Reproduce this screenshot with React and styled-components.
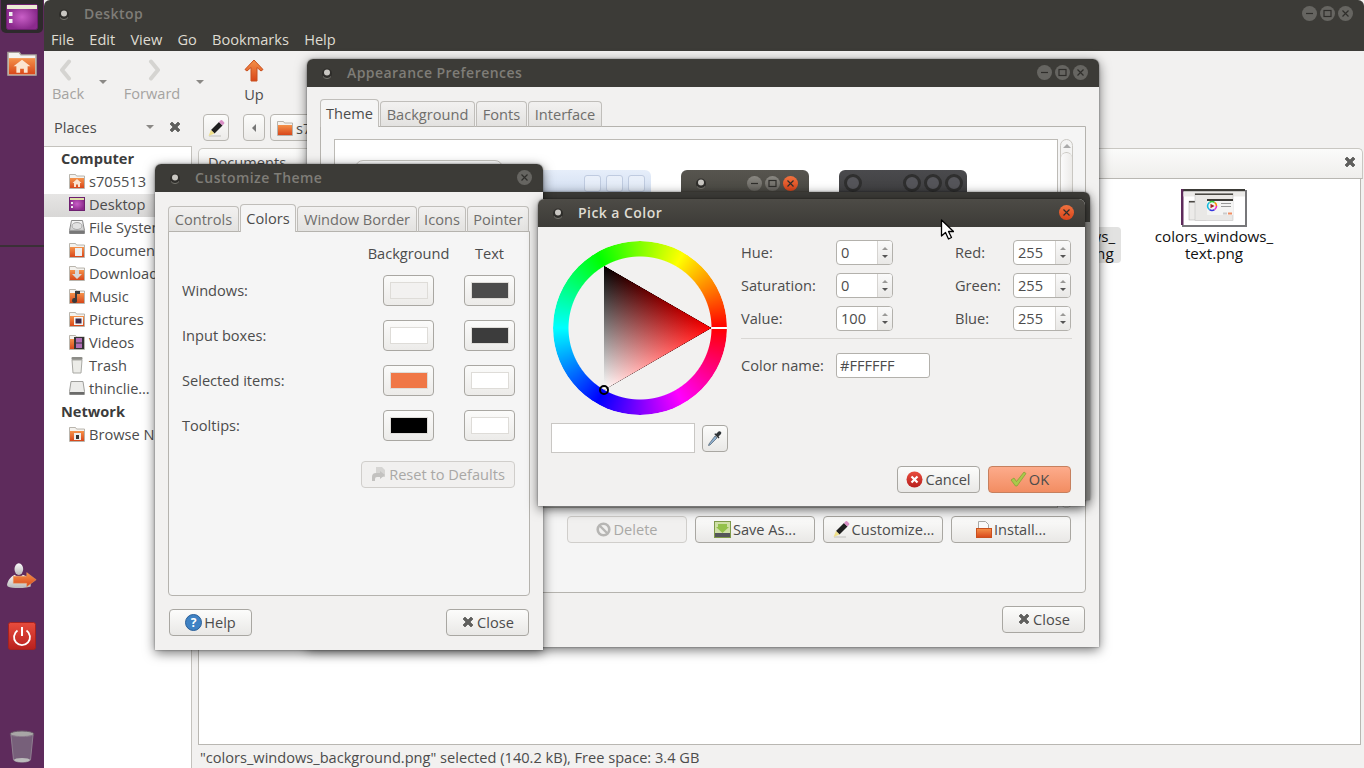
import React from 'react'
import styled, { createGlobalStyle } from 'styled-components'

const ink = '#4c4c4c'
const FONT = `"Open Sans", "Noto Sans", sans-serif`

const GlobalStyle = createGlobalStyle`
  html, body { margin: 0; padding: 0; overflow: hidden; background: #fff; }
  #root { width: 1364px; height: 768px; }
  svg { display: block; flex: none; }
`

const Desktop = styled.div`
  position: relative;
  width: 1364px;
  height: 768px;
  display: flex;
  overflow: hidden;
  font-family: ${FONT};
  font-size: 14.6px;
  color: ${ink};
`

/* launcher */
const Launcher = styled.nav`
  width: 44px;
  height: 768px;
  flex: none;
  background: #5e2b5c;
  display: flex;
  flex-direction: column;
  align-items: center;
`
const ActiveTile = styled.div`
  width: 42px;
  height: 33px;
  margin-top: 0;
  border-radius: 0 0 5px 5px;
  background: #2e2a2c;
  display: flex;
  align-items: center;
  justify-content: center;
`
const LaunchSlot = styled.div`
  margin-top: ${p => p.$top}px;
  height: ${p => p.$h}px;
  display: flex;
  align-items: center;
  justify-content: center;
`
const LaunchRule = styled.div`
  width: 44px;
  height: 2px;
  margin-top: 170px;
  background: #3a3036;
`

/* file manager */
const FileManager = styled.main`
  flex: 1;
  min-width: 0;
  display: flex;
  flex-direction: column;
  background: #f2f1f0;
`
const TitleBar = styled.header`
  height: 28px;
  flex: none;
  box-sizing: border-box;
  display: flex;
  align-items: center;
  padding: 0 ${p => p.$right || 11}px 1px 14px;
  background: ${p => p.$active ? 'linear-gradient(#4d4b46, #3c3b37)' : '#3c3b37'};
  border-radius: 6px 6px 0 0;
`
const TitleText = styled.span`
  margin-left: 14px;
  font-size: 14px;
  font-weight: 600;
  letter-spacing: 0.45px;
  color: ${p => p.$active ? '#dfdbd2' : '#7f7d77'};
  flex: 1;
  white-space: nowrap;
`
const TitleButtons = styled.div`
  display: flex;
  gap: 3px;
`
const RoundButton = styled.span`
  width: 15px;
  height: 15px;
  border-radius: 50%;
  display: flex;
  align-items: center;
  justify-content: center;
  background: ${p => p.$tone === 'hot' ? 'linear-gradient(#f0723f, #d8441a)' : p.$tone === 'lit' ? 'linear-gradient(#8a8882, #64625d)' : '#666561'};
`
const MenuBar = styled.div`
  height: 23px;
  flex: none;
  display: flex;
  align-items: center;
  gap: 15.2px;
  padding-left: 7px;
  background: #3c3b37;
  color: #dfdbd2;
  padding-bottom: 1px;
  box-sizing: border-box;
`
const ToolBar = styled.div`
  height: 63px;
  flex: none;
  display: flex;
`
const ToolItem = styled.div`
  width: ${p => p.$w}px;
  display: flex;
  flex-direction: column;
  align-items: center;
  padding-top: 8px;
  gap: 2px;
  color: ${p => p.$off ? '#a5a3a0' : ink};
`
const ToolArrow = styled.div`
  width: ${p => p.$w}px;
  padding-top: 29px;
  display: flex;
  justify-content: center;
`
const Caret = styled.span`
  width: 0;
  height: 0;
  border-left: ${p => p.$size || 4}px solid transparent;
  border-right: ${p => p.$size || 4}px solid transparent;
  ${p => p.$up ? 'border-bottom' : 'border-top'}: ${p => p.$size || 4}px solid ${p => p.$color || '#8b8986'};
  ${p => p.$left ? 'transform: rotate(90deg);' : ''}
`
const Panes = styled.div`
  flex: 1;
  min-height: 0;
  display: flex;
`
const SideColumn = styled.aside`
  width: 148px;
  flex: none;
  display: flex;
  flex-direction: column;
`
const PlacesHead = styled.div`
  height: 32px;
  flex: none;
  display: flex;
  align-items: center;
  gap: 14px;
  padding: 0 10px 7px;
  box-sizing: border-box;
`
const PlacesLabel = styled.span`
  flex: 1;
`
const SideTree = styled.div`
  flex: 1;
  background: #fff;
  border-top: 1px solid #c4c2bd;
  border-right: 1px solid #c4c2bd;
  padding-top: 1px;
  overflow: hidden;
`
const SideHeading = styled.div`
  height: 23px;
  line-height: 20px;
  padding-left: 17px;
  font-weight: 700;
  color: #3c3c3c;
`
const SideRow = styled.div`
  height: 23px;
  box-sizing: border-box;
  display: flex;
  align-items: center;
  gap: 4px;
  padding: 0 0 4px 25px;
  white-space: nowrap;
  background: ${p => p.$selected ? 'linear-gradient(#e6e5e4, #d8d7d6)' : 'transparent'};
`
const MainColumn = styled.div`
  flex: 1;
  min-width: 0;
  display: flex;
  flex-direction: column;
`
const PathBar = styled.div`
  height: 34px;
  flex: none;
  display: flex;
  align-items: flex-start;
  padding-left: 11px;
`
const PathButton = styled.div`
  width: ${p => p.$w}px;
  height: 27px;
  margin-right: ${p => p.$gap || 0}px;
  box-sizing: border-box;
  display: flex;
  align-items: center;
  justify-content: ${p => p.$left ? 'flex-start' : 'center'};
  gap: 3px;
  padding-left: ${p => p.$left ? 6 : 0}px;
  border: 1px solid #b8b6b1;
  border-radius: 4px;
  background: linear-gradient(#fcfcfb, #ecebe9);
`
const ViewArea = styled.div`
  flex: 1;
  min-height: 0;
  display: flex;
  flex-direction: column;
  margin-left: 6px;
  margin-right: 1px;
`
const TabStrip = styled.div`
  flex: none;
  display: flex;
  align-items: center;
  justify-content: space-between;
  padding: 0 5px 3px 9px;
  height: 26px;
  border: 1px solid #c9c7c2;
  border-bottom: 1px solid #b9b7b2;
  border-radius: 5px 5px 0 0;
  background: linear-gradient(#fbfbfa, #efeeec);
`
const FileGrid = styled.div`
  flex: 1;
  min-height: 0;
  display: flex;
  justify-content: flex-end;
  align-items: flex-start;
  padding: 10px 81px 0 0;
  margin-right: 2px;
  background: #fff;
  border: 1px solid #b9b7b2;
  border-top: 0;
  color: #111;
  font-size: 15.2px;
`
const FileCell = styled.figure`
  width: 130px;
  margin: 0 0 0 ${p => p.$gap || 0}px;
  display: flex;
  flex-direction: column;
  align-items: center;
`
const FileThumb = styled.div`
  height: 38px;
  display: flex;
  align-items: flex-end;
`
const FileName = styled.figcaption`
  width: 130px;
  margin-top: 0;
  padding: 1px 0;
  text-align: center;
  line-height: 17px;
  border-radius: 4px;
  background: ${p => p.$selected ? '#e2e2e1' : 'transparent'};
`
const StatusBar = styled.footer`
  height: 23px;
  flex: none;
  line-height: 25px;
  padding-left: 8px;
  white-space: nowrap;
`

/* floating windows */
const Win = styled.section`
  position: absolute;
  left: ${p => p.$x}px;
  top: ${p => p.$y}px;
  width: ${p => p.$w}px;
  height: ${p => p.$h}px;
  display: flex;
  flex-direction: column;
  background: #f2f1f0;
  border-radius: 6px 6px 0 0;
  box-shadow: 0 3px 12px rgba(0, 0, 0, 0.55), 0 0 2px rgba(0, 0, 0, 0.5);
`
const GhostWin = styled(Win)`
  background: linear-gradient(#3c3b37 0, #3c3b37 30px, #8d8c89 30px);
`
const WinBody = styled.div`
  flex: 1;
  min-height: 0;
  display: flex;
  flex-direction: column;
  padding: 12px 13px 0;
`
const TabRow = styled.div`
  height: 28px;
  flex: none;
  display: flex;
  align-items: flex-end;
  gap: 1px;
  margin-bottom: -1px;
  position: relative;
`
const Tab = styled.div`
  width: ${p => p.$w}px;
  height: ${p => p.$active ? 28 : 26}px;
  box-sizing: border-box;
  display: flex;
  align-items: center;
  justify-content: center;
  padding-bottom: ${p => p.$active ? 1 : 0}px;
  border: 1px solid #c0bebA;
  border-bottom: ${p => p.$active ? '0' : '1px solid #b5b3ae'};
  border-radius: 4px 4px 0 0;
  background: ${p => p.$active ? '#f5f5f5' : 'linear-gradient(#f2f1f0, #e3e2e0)'};
  color: ${p => p.$active ? ink : '#6f6e6c'};
  white-space: nowrap;
`
const NoteBook = styled.div`
  height: ${p => p.$h}px;
  flex: none;
  box-sizing: border-box;
  background: #f5f5f5;
  border: 1px solid #b5b3ae;
  border-radius: 0 0 4px 4px;
  display: flex;
  flex-direction: column;
`
const WinFoot = styled.div`
  display: flex;
  justify-content: ${p => p.$split ? 'space-between' : 'flex-end'};
  margin-top: 13px;
  padding: 0 1px;
`
const Btn = styled.div`
  width: ${p => p.$w}px;
  height: 27px;
  box-sizing: border-box;
  display: flex;
  align-items: center;
  justify-content: center;
  gap: 2px;
  padding-bottom: 1px;
  border: 1px solid ${p => p.$off ? '#d0cecb' : p.$hot ? '#c6805e' : '#a9a7a2'};
  border-radius: 4px;
  background: ${p => p.$hot ? 'linear-gradient(#fdab8b, #f28d62)' : p.$off ? '#f1f0ef' : 'linear-gradient(#fcfcfb, #e9e8e6)'};
  color: ${p => p.$off ? '#a9a8a6' : ink};
  white-space: nowrap;
`

/* customize theme: colours tab */
const ColorGrid = styled.div`
  display: grid;
  grid-template-columns: 171px 51px 51px;
  column-gap: 30px;
  row-gap: 14px;
  padding: 15px 0 0 13px;
  align-items: center;
`
const ColHead = styled.span`
  justify-self: center;
  height: 14px;
  line-height: 12px;
  white-space: nowrap;
`
const RowLabel = styled.span`
  padding-bottom: 2px;
  white-space: nowrap;
`
const ColorBtn = styled.div`
  height: 31px;
  box-sizing: border-box;
  display: flex;
  align-items: center;
  justify-content: center;
  border: 1px solid #a9a7a2;
  border-radius: 4px;
  background: linear-gradient(#fbfbfa, #eceBe9);
`
const Swatch = styled.span`
  width: 38px;
  height: 17px;
  box-sizing: border-box;
  border: 1px solid #dedcd8;
  background: ${p => p.$color};
`
const ResetRow = styled.div`
  display: flex;
  justify-content: flex-end;
  margin: 20px 14px 0 0;
`

/* appearance */
const ThemeWrap = styled.div`
  padding: 12px 0 0 13px;
`
const ThemeFrame = styled.div`
  height: 369px;
  flex: none;
  display: flex;
  gap: 2px;
`
const ThemeList = styled.div`
  width: 724px;
  box-sizing: border-box;
  background: #fff;
  border: 1px solid #bdbbb6;
  display: flex;
  gap: 10px;
  padding: 20px 0 0 20px;
`
const ThemeCell = styled.div`
  width: 148px;
  height: 90px;
  box-sizing: border-box;
  padding: 10px;
  border: 1px solid ${p => p.$selected ? '#c9c7c2' : 'transparent'};
  border-radius: 8px;
`
const ThumbTitle = styled.div`
  height: 26px;
  margin: -1px;
  display: flex;
  align-items: center;
  gap: ${p => p.$gap}px;
  padding: 0 ${p => p.$right}px 6px ${p => p.$left}px;
  border-radius: 6px 6px 0 0;
  background: ${p => p.$bg};
  justify-content: ${p => p.$end ? 'flex-end' : 'flex-start'};
`
const ThumbSquare = styled.span`
  width: 17px;
  height: 17px;
  box-sizing: border-box;
  border: 1px solid #bfcbe0;
  border-radius: 3px;
  background: rgba(255, 255, 255, 0.3);
`
const ThumbPush = styled.span`
  flex: 1;
`
const ThumbRing = styled.span`
  width: 18px;
  height: 18px;
  box-sizing: border-box;
  border: 3px solid #2f2f2f;
  border-radius: 50%;
  background: #55555a;
`
const ScrollBar = styled.div`
  width: 13px;
  box-sizing: border-box;
  border: 1px solid #c9c7c2;
  border-radius: 7px;
  background: #f4f4f3;
  display: flex;
  flex-direction: column;
  align-items: center;
  padding-top: 4px;
`
const ScrollThumb = styled.div`
  width: 11px;
  flex: 1;
  margin-top: 4px;
  border-top: 1px solid #c9c7c2;
  border-radius: 6px;
  background: linear-gradient(90deg, #fbfbfb, #ecebe9);
`
const ActionRow = styled.div`
  display: flex;
  justify-content: flex-end;
  gap: 8px;
  margin: 8px 14px 0 0;
`

/* pick a color */
const PickBody = styled.div`
  flex: 1;
  display: flex;
  padding: 13px 14px 13px 13px;
  position: relative;
`
const PickLeft = styled.div`
  width: 177px;
  flex: none;
  display: flex;
  flex-direction: column;
`
const Wheel = styled.div`
  position: relative;
  width: 174px;
  height: 174px;
  margin: 1px 0 0 2px;
`
const Hue = styled.div`
  position: absolute;
  inset: 0;
  border-radius: 50%;
  background: conic-gradient(from 90deg, #f00, #f0f, #00f, #0ff, #0f0, #ff0, #f00);
  mask: radial-gradient(circle, transparent 71px, #000 72px);
`
const HueMark = styled.span`
  position: absolute;
  left: 158px;
  top: 86px;
  width: 16px;
  height: 2px;
  background: #fff;
`
const PickerDot = styled.svg`
  position: absolute;
  left: 45px;
  top: 143px;
`
const TriangleSvg = styled.svg`
  position: absolute;
  left: 51px;
  top: 25px;
`
const TriangleLight = styled.polygon`
  mix-blend-mode: plus-lighter;
`
const TriangleGroup = styled.g`
  isolation: isolate;
`
const PreviewRow = styled.div`
  display: flex;
  gap: 7px;
  margin-top: 8px;
  align-items: center;
`
const PreviewBox = styled.div`
  width: 144px;
  height: 30px;
  box-sizing: border-box;
  border: 1px solid #c9c7c4;
  background: #fff;
`
const PickRight = styled.div`
  flex: 1;
  margin-left: 13px;
  display: flex;
  flex-direction: column;
`
const SpinGrid = styled.div`
  display: grid;
  grid-template-columns: 95px 57px 62px 58px 58px;
  grid-auto-rows: 25px;
  row-gap: 8px;
  align-items: center;
`
const FieldLabel = styled.span`
  padding-bottom: 2px;
  white-space: nowrap;
`
const LabelCell = styled(FieldLabel)`
  grid-column: ${p => p.$col};
`
const Spin = styled.div`
  grid-column: ${p => p.$col};
  height: 25px;
  box-sizing: border-box;
  display: flex;
  border: 1px solid #b3b1ac;
  border-radius: 4px;
  overflow: hidden;
  background: #fff;
`
const SpinValue = styled.span`
  flex: 1;
  line-height: 23px;
  padding-left: 4px;
`
const SpinArrows = styled.span`
  width: 15px;
  box-sizing: border-box;
  display: flex;
  flex-direction: column;
  align-items: center;
  justify-content: center;
  gap: 5px;
  border-left: 1px solid #d6d4d1;
  background: linear-gradient(#fafafa, #e9e8e6);
`
const Rule = styled.hr`
  width: 331px;
  height: 1px;
  border: 0;
  margin: 7px 0 14px;
  background: #d9d7d4;
`
const NameRow = styled.div`
  display: flex;
  align-items: center;
`
const NameLabel = styled(FieldLabel)`
  width: 95px;
`
const NameEntry = styled.span`
  width: 94px;
  height: 25px;
  box-sizing: border-box;
  line-height: 23px;
  padding-left: 3px;
  border: 1px solid #b3b1ac;
  border-radius: 3px;
  background: #fff;
`
const PickFoot = styled.div`
  position: absolute;
  right: 14px;
  bottom: 13px;
  display: flex;
  gap: 8px;
`
const Pointer = styled.svg`
  position: absolute;
  left: 940px;
  top: 219px;
`
const HiddenDefs = styled.svg`
  position: absolute;
`

/* drawings */
const SvgDefs = () => (
  <HiddenDefs width="0" height="0">
    <defs>
      <linearGradient id="orange" x1="0" y1="0" x2="0" y2="1"><stop offset="0" stopColor="#f5924a" /><stop offset="1" stopColor="#d8471a" /></linearGradient>
      <radialGradient id="violet"><stop offset="0" stopColor="#c95fc7" /><stop offset="1" stopColor="#8a2a8c" /></radialGradient>
      <linearGradient id="redgrad" x1="0" y1="0" x2="0" y2="1"><stop offset="0" stopColor="#e84c3d" /><stop offset="1" stopColor="#b8201e" /></linearGradient>
      <linearGradient id="silver" x1="0" y1="0" x2="0" y2="1"><stop offset="0" stopColor="#fafafa" /><stop offset="1" stopColor="#b9b9b9" /></linearGradient>
      <linearGradient id="triWhite" gradientUnits="userSpaceOnUse" x1="0" y1="124" x2="53.7" y2="31.1"><stop offset="0" stopColor="#fff" /><stop offset="1" stopColor="#000" /></linearGradient>
      <linearGradient id="triRed" gradientUnits="userSpaceOnUse" x1="0" y1="0" x2="107.300" y2="0"><stop offset="0" stopColor="#000" /><stop offset="1" stopColor="#f00" /></linearGradient>
    </defs>
  </HiddenDefs>
)

const CrossIcon = ({ size = 14 }) => (
  <svg width={size} height={size} viewBox="0 0 14 14"><path d="M2 4l2-2 3 3 3-3 2 2-3 3 3 3-2 2-3-3-3 3-2-2 3-3z" fill="#5f5f5d" stroke="#6f6f6d" strokeWidth="1" strokeLinejoin="round" /></svg>
)
const PencilIcon = () => (
  <svg width="18" height="18" viewBox="0 0 18 18">
    <path d="M2 17h12" stroke="#cfcfcd" strokeWidth="1.5" />
    <path d="M4 11l8-8 3.500 3.500-8 8z" fill="#1f1f1f" />
    <path d="M12 3l1.700-1.700a1 1 0 0 1 1.400 0l2 2a1 1 0 0 1 0 1.400L15.500 6.500z" fill="#d98fc6" />
    <path d="M4 11l-2.500 6 6-2.500z" fill="#efe08a" />
  </svg>
)
const Dot = () => (
  <svg width="12" height="12" viewBox="0 0 12 12"><circle cx="6" cy="6.500" r="5" fill="#2e2d2a" /><circle cx="6" cy="5.500" r="3" fill="#c9c7c2" /><path d="M2 9.500a5 5 0 0 0 8 0" fill="none" stroke="#77756f" /></svg>
)
const Glyph = ({ kind, color = '#2f2e2b' }) => (
  <svg width="9" height="9" viewBox="0 0 9 9" fill="none" stroke={color} strokeWidth="1.200">
    {kind === 'min' && <path d="M1 4.500h7" />}
    {kind === 'max' && <rect x="1" y="1.500" width="7" height="6" />}
    {kind === 'close' && <path d="M1.500 1.500l6 6M7.500 1.500l-6 6" />}
  </svg>
)
const Folder = ({ children, w = 16, h = 16 }) => (
  <svg width={w} height={h} viewBox="0 0 16 16" preserveAspectRatio="none">
    <path d="M.5 1.500h6l1 1.500h8v12.500H.5z" fill="#f4f2ee" stroke="#a8a39b" strokeWidth=".8" />
    <rect x="1" y="5" width="14" height="10" fill="url(#orange)" />
    {children}
  </svg>
)
const House = () => <path d="M8 6l-4.500 4H5v4h2v-2.500h2V14h2v-4h1.500z" fill="#fbe4d0" />
const DashIcon = () => (
  <svg width="32" height="26" viewBox="0 0 32 26">
    <rect x=".5" y=".5" width="31" height="25" rx="2" fill="url(#violet)" stroke="#6d1f70" />
    <rect x="1" y="1" width="30" height="4" fill="#ecebd4" />
    <rect x="3" y="8" width="3.500" height="4" fill="#eee" /><rect x="3" y="15" width="3.500" height="4" fill="#eee" />
  </svg>
)
const DesktopMini = () => (
  <svg width="16" height="16" viewBox="0 0 16 16">
    <rect x=".5" y="1.500" width="15" height="13" fill="url(#violet)" stroke="#6d1f70" />
    <rect x="1" y="2" width="14" height="2" fill="#dfe0a8" />
    <rect x="2" y="6" width="2" height="2" fill="#eee" /><rect x="2" y="10" width="2" height="2" fill="#eee" />
  </svg>
)
const DiskIcon = () => (
  <svg width="16" height="16" viewBox="0 0 16 16">
    <path d="M2.500 1.500h11l2 10v3H.5v-3z" fill="url(#silver)" stroke="#8a8a8a" />
    <ellipse cx="8" cy="7" rx="5" ry="3.500" fill="#e2e2e2" stroke="#aaa" />
    <rect x="1" y="11.500" width="14" height="3" fill="#777" />
  </svg>
)
const TrashMini = () => (
  <svg width="16" height="18" viewBox="0 0 16 18">
    <rect x="2.500" y="1" width="11" height="3" rx="1" fill="#8d8d88" />
    <path d="M3 4h10l-1 13H4z" fill="#ecece8" stroke="#a9a9a4" />
  </svg>
)
const DriveMini = () => (
  <svg width="16" height="16" viewBox="0 0 16 16">
    <path d="M2 1.500h12l1.500 10v3H.5v-3z" fill="#ececea" stroke="#9f9f9c" />
    <rect x="1" y="12" width="14" height="2.500" fill="#6b6b6a" />
  </svg>
)
const ChevronIcon = ({ right }) => (
  <svg width="16" height="22" viewBox="0 0 16 22">
    <path d={right ? 'M7 2.500L14 11l-7 8.500' : 'M9 2.500L2 11l7 8.500'} fill="none" stroke="#d5d4d1" strokeWidth="4" strokeLinejoin="round" strokeLinecap="round" />
  </svg>
)
const UpIcon = () => (
  <svg width="20" height="23" viewBox="0 0 20 23"><path d="M10 1L1 10.500l2 1.500 4-3.500V22h6V8.500l4 3.500 2-1.500z" fill="url(#orange)" stroke="#c9501e" strokeLinejoin="round" /></svg>
)
const HelpIcon = () => (
  <svg width="17" height="17" viewBox="0 0 17 17"><circle cx="8.500" cy="8.500" r="8" fill="#3f82c4" stroke="#2a5f98" /><text x="8.500" y="13" textAnchor="middle" fontSize="12" fontWeight="700" fill="#fff" fontFamily={FONT}>?</text></svg>
)
const CancelIcon = () => (
  <svg width="17" height="17" viewBox="0 0 17 17"><circle cx="8.500" cy="8.500" r="8" fill="url(#redgrad)" /><path d="M5.500 5.500l6 6M11.500 5.500l-6 6" stroke="#fff" strokeWidth="2.200" /></svg>
)
const CheckIcon = () => (
  <svg width="17" height="16" viewBox="0 0 17 16"><path d="M1 9l3-2 2.500 3.500L14 1l2 1.500L7 15H5.500z" fill="#a9c94a" stroke="#7f9e34" strokeWidth=".7" /></svg>
)
const NoIcon = () => (
  <svg width="15" height="15" viewBox="0 0 15 15"><circle cx="7.500" cy="7.500" r="5.800" fill="none" stroke="#b7b6b4" strokeWidth="2.600" /><path d="M3.500 3.500l8 8" stroke="#b7b6b4" strokeWidth="2.400" /></svg>
)
const SaveIcon = () => (
  <svg width="17" height="17" viewBox="0 0 17 17">
    <rect x=".5" y=".5" width="16" height="16" fill="#cfe0a6" stroke="#7f9a4a" />
    <rect x="1" y="12" width="15" height="4" fill="#55565a" />
    <path d="M4 3h9v3h2l-6.500 6L2 6h2z" fill="#93c14a" />
  </svg>
)
const InstallIcon = () => (
  <svg width="16" height="17" viewBox="0 0 16 17">
    <path d="M2.500.5h7l3 3v6h-10z" fill="#fafafa" stroke="#a9a9a6" />
    <rect x=".5" y="7.500" width="15" height="9" fill="url(#orange)" stroke="#c9501e" />
  </svg>
)
const DropperIcon = () => (
  <svg width="16" height="17" viewBox="0 0 16 17">
    <path d="M2 15l-.5 1.500L3 16l7-7-2-2z" fill="#8fb0cf" stroke="#5d6d7d" strokeWidth=".8" />
    <path d="M7.500 5.500l4 4 1-1-1-1 2.500-2.500a1.800 1.800 0 0 0-2.500-2.500L9 5l-1-1z" fill="#2f3438" />
  </svg>
)
const ResetIcon = () => (
  <svg width="16" height="16" viewBox="0 0 16 16" fill="#d6d5d3"><path d="M5 1h6l3 3v7H5z" /><path d="M1 15v-4a4 4 0 0 1 4-4h4V5l5 4-5 4v-2H6a2 2 0 0 0-2 2v2z" fill="#c3c2c0" /></svg>
)
const SessionIcon = () => (
  <svg width="30" height="30" viewBox="0 0 38 36">
    <ellipse cx="15" cy="8" rx="5.500" ry="7.500" fill="url(#silver)" />
    <path d="M10 15c1 3 9 3 10 0 5 2 9 5 10 9H30v6c-3 2-23 3-29 0l-1-2c1-6 5-11 10-13z" fill="url(#silver)" />
    <path d="M8 21h17v-5l12 10-12 10v-5H8z" transform="translate(0 -2) scale(1 .9)" fill="url(#orange)" stroke="#e8a060" strokeWidth=".6" />
  </svg>
)
const PowerIcon = () => (
  <svg width="28" height="28" viewBox="0 0 28 28">
    <rect x=".5" y=".5" width="27" height="27" rx="2" fill="url(#redgrad)" stroke="#a62220" />
    <path d="M9.500 8.500a8 8 0 1 0 9 0" fill="none" stroke="#fff" strokeWidth="1.800" />
    <path d="M14 5v9" stroke="#fff" strokeWidth="2" />
  </svg>
)
const TrashIcon = () => (
  <svg width="26" height="33" viewBox="0 0 26 33">
    <ellipse cx="13" cy="4" rx="12" ry="3" fill="#a8a6a6" stroke="#6b5a6a" />
    <path d="M2 5c3 2 19 2 22 0l-2.500 25c-3 3-14 3-17 0z" fill="#77607a" stroke="#8f7f90" />
    <ellipse cx="13" cy="30" rx="8" ry="2" fill="#bbb" />
  </svg>
)
const MiniShot = () => (
  <svg width="66" height="38" viewBox="0 0 66 38">
    <rect x="1" y="1" width="65" height="37" fill="#77777a" />
    <rect width="64" height="36" fill="#fff" />
    <rect width="64" height="2.500" fill="#3c3b37" />
    <rect width="2.500" height="36" fill="#5e2b5c" />
    <rect x="2.500" y="2.500" width="61.500" height="5" fill="#ecebe9" />
    <rect x="8" y="12" width="17" height="19" fill="#eceBe9" stroke="#aaa" strokeWidth=".5" />
    <rect x="8" y="12" width="17" height="1.500" fill="#4a4944" />
    <rect x="16" y="16" width="4" height="2" fill="#777" /><rect x="20.500" y="16" width="3" height="2" fill="#555" />
    <rect x="20.500" y="20" width="3" height="2" fill="#333" /><rect x="16" y="24" width="4" height="2" fill="#e97" />
    <rect x="14" y="4.500" width="38" height="27" fill="#e9e8e6" stroke="#bbb" strokeWidth=".5" />
    <rect x="14" y="4.500" width="38" height="1.500" fill="#4a4944" />
    <rect x="26" y="10" width="26" height="2" fill="#3c3b37" />
    <rect x="26" y="12" width="26" height="14" fill="#f4f4f3" />
    <g fill="none" strokeWidth="1.600">
      <path d="M35.500 17a4.500 4.500 0 0 0-2-3.700" stroke="#f80" />
      <path d="M33.500 13.300a4.500 4.500 0 0 0-5 0" stroke="#3c3" />
      <path d="M28.500 13.300a4.500 4.500 0 0 0 0 7.400" stroke="#1bd" />
      <path d="M28.500 20.700a4.500 4.500 0 0 0 5 0" stroke="#33d" />
      <path d="M33.500 20.700a4.500 4.500 0 0 0 2-3.700" stroke="#e2c" />
    </g>
    <path d="M29.500 14.800v4.400l4-2.200z" fill="#a22" />
    <rect x="47" y="23.500" width="4" height="2" fill="#f28d62" />
    <rect x="42" y="23.500" width="4" height="2" fill="#ccc" />
    <rect x="40" y="14" width="10" height="1" fill="#999" /><rect x="40" y="17" width="10" height="1" fill="#999" />
  </svg>
)

const Triangle = () => (
  <TriangleSvg width="108" height="124" viewBox="0 0 108 124">
    <TriangleGroup>
      <polygon points="0,0 107.300,62 0,124" fill="url(#triWhite)" />
      <TriangleLight points="0,0 107.300,62 0,124" fill="url(#triRed)" />
    </TriangleGroup>
  </TriangleSvg>
)

const WindowButtons = ({ close, lit }) => (
  <TitleButtons>
    <RoundButton $tone={lit ? 'lit' : undefined}><Glyph kind="min" /></RoundButton>
    <RoundButton $tone={lit ? 'lit' : undefined}><Glyph kind="max" /></RoundButton>
    <RoundButton $tone={close}><Glyph kind="close" /></RoundButton>
  </TitleButtons>
)

const places = [
  ['s705513', <Folder><House /></Folder>],
  ['Desktop', <DesktopMini />, true],
  ['File System', <DiskIcon />],
  ['Documents', <Folder><rect x="6" y="6" width="7" height="8" fill="#eee" /></Folder>],
  ['Downloads', <Folder><path d="M6 5h4v4h3l-5 5-5-5h3z" fill="#d8d8d8" /></Folder>],
  ['Music', <Folder><path d="M8 3v9a2.500 2.500 0 1 1-2-2V3h5v3H8z" fill="#3a3a3a" /></Folder>],
  ['Pictures', <Folder><rect x="5" y="6" width="9" height="8" fill="#f5f5f5" /><rect x="6.500" y="7.500" width="6" height="5" fill="#3d2a4a" /></Folder>],
  ['Videos', <Folder><rect x="5" y="3" width="10" height="12" fill="#333" /><rect x="7" y="4" width="6" height="4.500" fill="#b16db5" /><rect x="7" y="9.500" width="6" height="4.500" fill="#b16db5" /></Folder>],
  ['Trash', <TrashMini />],
  ['thinclie…', <DriveMini />],
]

const colorRows = [
  ['Windows:', '#f2f1f0', '#4c4c4c'],
  ['Input boxes:', '#ffffff', '#3c3c3c'],
  ['Selected items:', '#f07746', '#ffffff'],
  ['Tooltips:', '#000000', '#ffffff'],
]

const spinRows = [
  ['Hue:', '0', 'Red:', '255'],
  ['Saturation:', '0', 'Green:', '255'],
  ['Value:', '100', 'Blue:', '255'],
]

const SpinBox = ({ col, value }) => (
  <Spin $col={col}>
    <SpinValue>{value}</SpinValue>
    <SpinArrows>
      <Caret $up $size={3} $color="#9a9997" />
      <Caret $size={3} $color="#555" />
    </SpinArrows>
  </Spin>
)

const App = () => {
  return (
    <Desktop>
      <GlobalStyle />
      <SvgDefs />

      <Launcher>
        <ActiveTile><DashIcon /></ActiveTile>
        <LaunchSlot $top={17} $h={25}>
          <Folder w={30} h={26}><House /></Folder>
        </LaunchSlot>
        <LaunchRule />
        <LaunchSlot $top={314} $h={32}><SessionIcon /></LaunchSlot>
        <LaunchSlot $top={29} $h={28}><PowerIcon /></LaunchSlot>
        <LaunchSlot $top={80} $h={33}><TrashIcon /></LaunchSlot>
      </Launcher>

      <FileManager>
        <TitleBar>
          <Dot />
          <TitleText>Desktop</TitleText>
          <WindowButtons />
        </TitleBar>
        <MenuBar>
          <span>File</span><span>Edit</span><span>View</span><span>Go</span><span>Bookmarks</span><span>Help</span>
        </MenuBar>
        <ToolBar>
          <ToolItem $w={48} $off><ChevronIcon />Back</ToolItem>
          <ToolArrow $w={22}><Caret /></ToolArrow>
          <ToolItem $w={76} $off><ChevronIcon right />Forward</ToolItem>
          <ToolArrow $w={20}><Caret /></ToolArrow>
          <ToolItem $w={88}><UpIcon />Up</ToolItem>
        </ToolBar>
        <Panes>
          <SideColumn>
            <PlacesHead>
              <PlacesLabel>Places</PlacesLabel>
              <Caret />
              <CrossIcon />
            </PlacesHead>
            <SideTree>
              <SideHeading>Computer</SideHeading>
              {places.map(([label, icon, selected]) => (
                <SideRow key={label} $selected={selected}>{icon}{label}</SideRow>
              ))}
              <SideHeading>Network</SideHeading>
              <SideRow><Folder><rect x="5" y="7" width="7" height="7" fill="#eee" /><rect x="7" y="9" width="3" height="4" fill="#333" /></Folder>Browse Network</SideRow>
            </SideTree>
          </SideColumn>
          <MainColumn>
            <PathBar>
              <PathButton $w={26} $gap={14}><PencilIcon /></PathButton>
              <PathButton $w={22} $gap={5}><Caret $size={4} $left $color="#777" /></PathButton>
              <PathButton $w={110} $left><Folder /><span>s705513</span></PathButton>
            </PathBar>
            <ViewArea>
              <TabStrip>
                <span>Documents</span>
                <CrossIcon />
              </TabStrip>
              <FileGrid>
                <FileCell>
                  <FileThumb />
                  <FileName $selected>colors_windows_<br />background.png</FileName>
                </FileCell>
                <FileCell $gap={28}>
                  <FileThumb><MiniShot /></FileThumb>
                  <FileName>colors_windows_<br />text.png</FileName>
                </FileCell>
              </FileGrid>
            </ViewArea>
            <StatusBar>"colors_windows_background.png" selected (140.2 kB), Free space: 3.4 GB</StatusBar>
          </MainColumn>
        </Panes>
      </FileManager>

      <Win $x={307} $y={59} $w={792} $h={588}>
        <TitleBar>
          <Dot />
          <TitleText>Appearance Preferences</TitleText>
          <WindowButtons />
        </TitleBar>
        <WinBody>
          <TabRow>
            <Tab $w={59} $active>Theme</Tab>
            <Tab $w={95}>Background</Tab>
            <Tab $w={51}>Fonts</Tab>
            <Tab $w={74}>Interface</Tab>
          </TabRow>
          <NoteBook $h={467}>
            <ThemeWrap>
              <ThemeFrame>
                <ThemeList>
                  <ThemeCell $selected />
                  <ThemeCell>
                    <ThumbTitle $bg="linear-gradient(#e6eefa, #ccd9ee)" $end $right={6} $left={0} $gap={5}>
                      <ThumbSquare /><ThumbSquare /><ThumbSquare />
                    </ThumbTitle>
                  </ThemeCell>
                  <ThemeCell>
                    <ThumbTitle $bg="linear-gradient(#57554f, #45443f)" $left={14} $right={11} $gap={3}>
                      <Dot /><ThumbPush />
                      <WindowButtons lit close="hot" />
                    </ThumbTitle>
                  </ThemeCell>
                  <ThemeCell>
                    <ThumbTitle $bg="linear-gradient(#4a4a4d, #3b3b3d)" $left={5} $right={4} $gap={3}>
                      <ThumbRing /><ThumbPush /><ThumbRing /><ThumbRing /><ThumbRing />
                    </ThumbTitle>
                  </ThemeCell>
                </ThemeList>
                <ScrollBar>
                  <Caret $up $size={4} $color="#aaa" />
                  <ScrollThumb />
                </ScrollBar>
              </ThemeFrame>
              <ActionRow>
                <Btn $w={120} $off><NoIcon />Delete</Btn>
                <Btn $w={120}><SaveIcon />Save As...</Btn>
                <Btn $w={120}><PencilIcon />Customize...</Btn>
                <Btn $w={120}><InstallIcon />Install...</Btn>
              </ActionRow>
            </ThemeWrap>
          </NoteBook>
          <WinFoot>
            <Btn $w={83}><CrossIcon />Close</Btn>
          </WinFoot>
        </WinBody>
      </Win>

      <GhostWin $x={538} $y={192} $w={552} $h={308} />

      <Win $x={155} $y={164} $w={388} $h={486}>
        <TitleBar>
          <Dot />
          <TitleText>Customize Theme</TitleText>
          <RoundButton><Glyph kind="close" /></RoundButton>
        </TitleBar>
        <WinBody>
          <TabRow>
            <Tab $w={71}>Controls</Tab>
            <Tab $w={56} $active>Colors</Tab>
            <Tab $w={120}>Window Border</Tab>
            <Tab $w={48}>Icons</Tab>
            <Tab $w={62}>Pointer</Tab>
          </TabRow>
          <NoteBook $h={365}>
            <ColorGrid>
              <span />
              <ColHead>Background</ColHead>
              <ColHead>Text</ColHead>
              {colorRows.map(([label, bg, fg]) => (
                <React.Fragment key={label}>
                  <RowLabel>{label}</RowLabel>
                  <ColorBtn><Swatch $color={bg} /></ColorBtn>
                  <ColorBtn><Swatch $color={fg} /></ColorBtn>
                </React.Fragment>
              ))}
            </ColorGrid>
            <ResetRow>
              <Btn $w={154} $off><ResetIcon />Reset to Defaults</Btn>
            </ResetRow>
          </NoteBook>
          <WinFoot $split>
            <Btn $w={83}><HelpIcon />Help</Btn>
            <Btn $w={83}><CrossIcon />Close</Btn>
          </WinFoot>
        </WinBody>
      </Win>

      <Win $x={538} $y={199} $w={547} $h={307}>
        <TitleBar $active $right={11}>
          <Dot />
          <TitleText $active>Pick a Color</TitleText>
          <RoundButton $tone="hot"><Glyph kind="close" /></RoundButton>
        </TitleBar>
        <PickBody>
          <PickLeft>
            <Wheel>
              <Hue />
              <HueMark />
              <Triangle />
              <PickerDot width="12" height="12" viewBox="0 0 12 12">
                <circle cx="6" cy="6" r="4" fill="none" stroke="#000" strokeWidth="2" />
              </PickerDot>
            </Wheel>
            <PreviewRow>
              <PreviewBox />
              <Btn $w={26}><DropperIcon /></Btn>
            </PreviewRow>
          </PickLeft>
          <PickRight>
            <SpinGrid>
              {spinRows.map(([a, av, b, bv]) => (
                <React.Fragment key={a}>
                  <LabelCell $col={1}>{a}</LabelCell>
                  <SpinBox col={2} value={av} />
                  <LabelCell $col={4}>{b}</LabelCell>
                  <SpinBox col={5} value={bv} />
                </React.Fragment>
              ))}
            </SpinGrid>
            <Rule />
            <NameRow>
              <NameLabel>Color name:</NameLabel>
              <NameEntry>#FFFFFF</NameEntry>
            </NameRow>
          </PickRight>
          <PickFoot>
            <Btn $w={83}><CancelIcon />Cancel</Btn>
            <Btn $w={83} $hot><CheckIcon />OK</Btn>
          </PickFoot>
        </PickBody>
      </Win>

      <Pointer width="14" height="22" viewBox="0 0 14 22">
        <path d="M1.500 1v16l4-3.500 3 6.500 3-1.500-3-6h5z" fill="#fff" stroke="#000" strokeWidth="1.300" strokeLinejoin="round" />
      </Pointer>
    </Desktop>
  )
}

export default App
